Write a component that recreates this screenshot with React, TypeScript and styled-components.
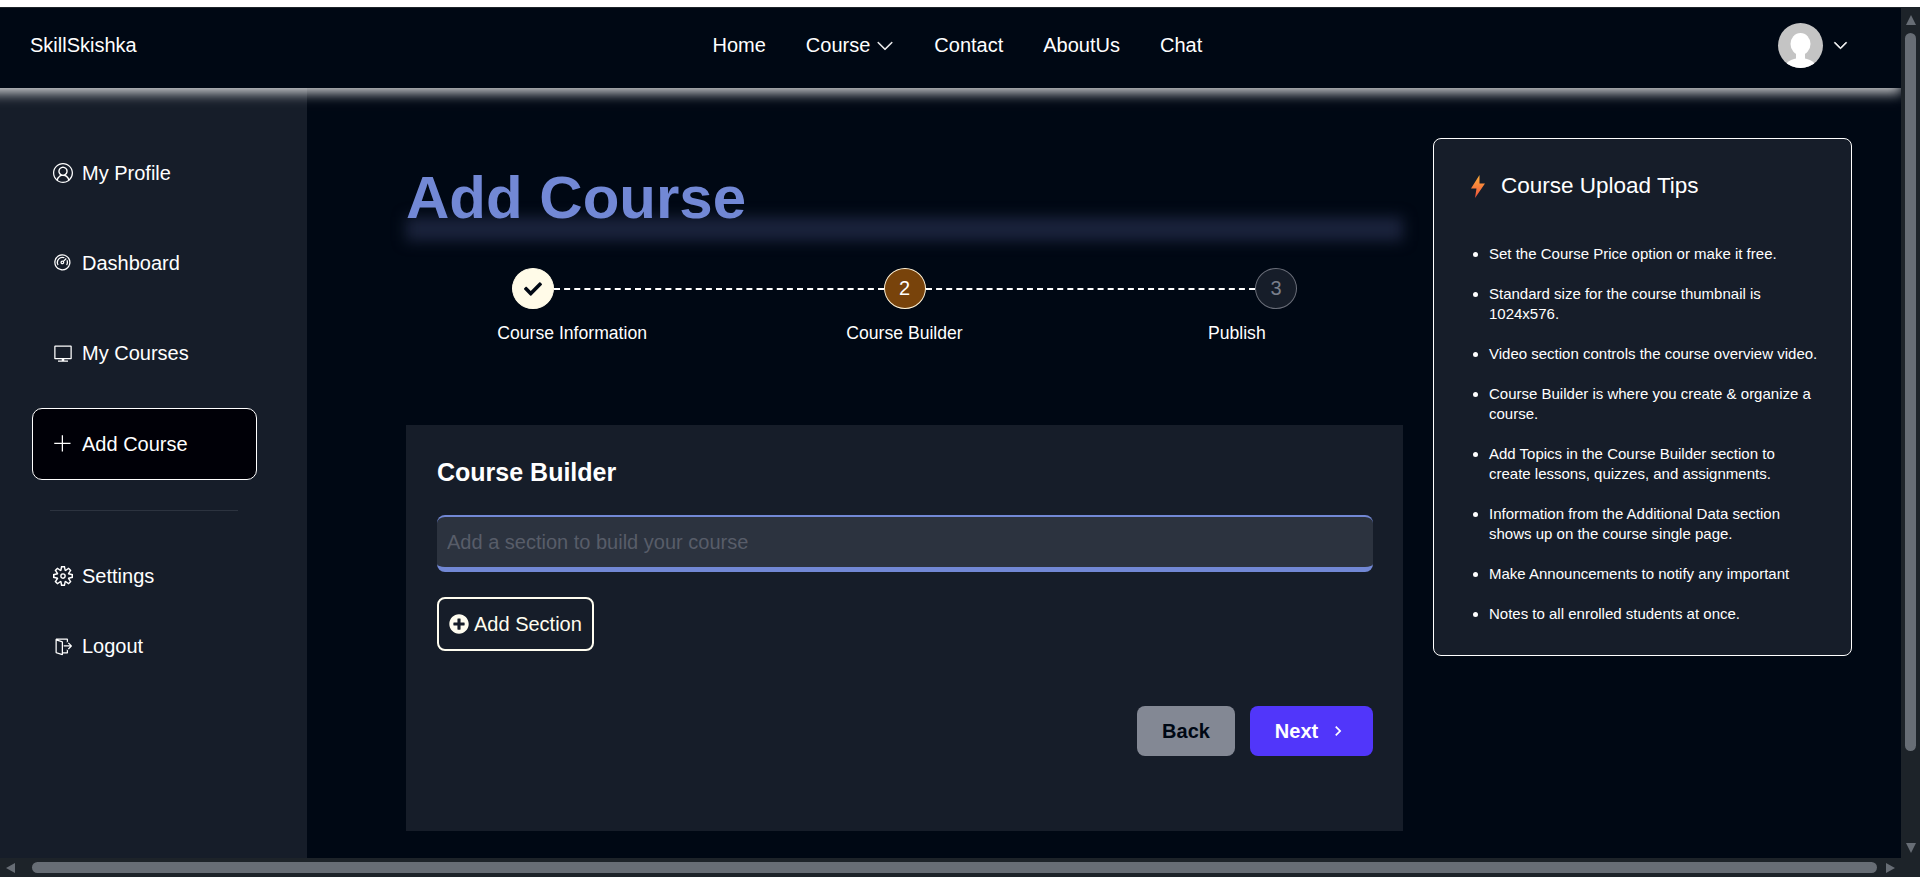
import { createGlobalStyle, styled } from "styled-components";
import { BsChevronDown } from "react-icons/bs";
import { FaCheck, FaPlusCircle } from "react-icons/fa";
import { MdNavigateNext } from "react-icons/md";
import {
  VscAccount,
  VscAdd,
  VscDashboard,
  VscSettingsGear,
  VscSignOut,
  VscVm,
} from "react-icons/vsc";

const GlobalStyle = createGlobalStyle`
  * { box-sizing: border-box; }
  html, body { margin: 0; height: 100%; overflow: hidden; background: #fff; }
  body { font-family: "Liberation Sans", Arial, sans-serif; color: #fff; }
  ul, h1, h2, h3, p { margin: 0; padding: 0; }
`;

const links = ["Home", "Course", "Contact", "AboutUs", "Chat"];

const topItems = [
  { label: "My Profile", icon: <VscAccount /> },
  { label: "Dashboard", icon: <VscDashboard /> },
  { label: "My Courses", icon: <VscVm /> },
  { label: "Add Course", icon: <VscAdd />, active: true },
];

const bottomItems = [
  { label: "Settings", icon: <VscSettingsGear /> },
  { label: "Logout", icon: <VscSignOut /> },
];

const tips = [
  "Set the Course Price option or make it free.",
  "Standard size for the course thumbnail is 1024x576.",
  "Video section controls the course overview video.",
  "Course Builder is where you create & organize a course.",
  "Add Topics in the Course Builder section to create lessons, quizzes, and assignments.",
  "Information from the Additional Data section shows up on the course single page.",
  "Make Announcements to notify any important",
  "Notes to all enrolled students at once.",
];

function App() {
  return (
    <>
      <GlobalStyle />
      <Window>
        <Viewport>
          <Page>
            <Navbar>
              <Logo>SkillSkishka</Logo>
              <NavLinks>
                {links.map((link) => (
                  <NavLink key={link}>
                    {link}
                    {link === "Course" && (
                      <BsChevronDown size={18} stroke="currentColor" strokeWidth={0.4} />
                    )}
                  </NavLink>
                ))}
              </NavLinks>
              <Profile>
                <Avatar>
                  <svg width="45" height="45" viewBox="0 0 45 45">
                    <ellipse cx="22.5" cy="21" rx="10" ry="11" fill="#fff" />
                    <rect x="18" y="28" width="9" height="10" fill="#fff" />
                    <ellipse cx="22.5" cy="47" rx="17" ry="12" fill="#fff" />
                  </svg>
                </Avatar>
                <BsChevronDown size={15} stroke="currentColor" strokeWidth={0.8} />
              </Profile>
            </Navbar>
            <Body>
              <Sidebar>
                <SideGroup>
                  {topItems.map((item) => (
                    <SideItem key={item.label} $tall $active={item.active}>
                      {item.icon}
                      {item.label}
                    </SideItem>
                  ))}
                </SideGroup>
                <SideDivider />
                <BottomGroup>
                  {bottomItems.map((item) => (
                    <SideItem key={item.label}>
                      {item.icon}
                      {item.label}
                    </SideItem>
                  ))}
                </BottomGroup>
              </Sidebar>
              <Main>
                <Column>
                  <Title>Add Course</Title>
                  <StepRow>
                    <StepCircle $state="done">
                      <FaCheck size={18} />
                    </StepCircle>
                    <Dashes />
                    <StepCircle $state="current">2</StepCircle>
                    <Dashes />
                    <StepCircle $state="todo">3</StepCircle>
                  </StepRow>
                  <StepLabels>
                    <span>Course Information</span>
                    <span>Course Builder</span>
                    <span>Publish</span>
                  </StepLabels>
                  <BuilderCard>
                    <BuilderTitle>Course Builder</BuilderTitle>
                    <SectionInput placeholder="Add a section to build your course" />
                    <AddSection>
                      <FaPlusCircle size={20} />
                      Add Section
                    </AddSection>
                    <Actions>
                      <BackButton>Back</BackButton>
                      <NextButton>
                        Next
                        <MdNavigateNext size={20} />
                      </NextButton>
                    </Actions>
                  </BuilderCard>
                </Column>
                <TipsCard>
                  <TipsTitle>
                    <svg width="14" height="23" viewBox="0 0 14 23">
                      <defs>
                        <linearGradient id="bolt" x1="0" y1="0" x2="0" y2="1">
                          <stop offset="0" stopColor="#ffb03a" />
                          <stop offset="1" stopColor="#f0503c" />
                        </linearGradient>
                      </defs>
                      <path d="M8.5 0 L0 13.5 H5.5 L4 23 L14 8.5 H8.5 Z" fill="url(#bolt)" />
                    </svg>
                    Course Upload Tips
                  </TipsTitle>
                  <TipsList>
                    {tips.map((tip) => (
                      <li key={tip}>{tip}</li>
                    ))}
                  </TipsList>
                </TipsCard>
              </Main>
            </Body>
          </Page>
          <VerticalBar>
            <ArrowUp />
            <VerticalThumb />
            <ArrowDown />
          </VerticalBar>
        </Viewport>
        <HorizontalBar>
          <ArrowLeft />
          <HorizontalThumb />
          <ArrowRight />
        </HorizontalBar>
      </Window>
    </>
  );
}

export default App;

const Window = styled.div`
  height: 100vh;
  padding-top: 8px;
  display: flex;
  flex-direction: column;
  background: #fff;
  overflow: hidden;
`;

const Viewport = styled.div`
  flex: 1;
  min-height: 0;
  display: flex;
  border-top: 1px solid #1d2329;
  margin-top: -1px;
`;

const Page = styled.div`
  flex: 1;
  min-width: 0;
  display: flex;
  flex-direction: column;
  background: #000814;
  overflow: hidden;
`;

const Navbar = styled.header`
  position: relative;
  z-index: 2;
  flex: 0 0 80px;
  margin-left: -24px;
  padding: 0 53px 0 54px;
  display: flex;
  align-items: center;
  justify-content: space-between;
  background: #000814;
  box-shadow: 0 5px 12px rgba(255, 255, 255, 0.8);
`;

const Logo = styled.div`
  font-size: 20px;
  padding-bottom: 5px;
`;

const NavLinks = styled.nav`
  display: flex;
  gap: 40px;
  padding-bottom: 5px;
`;

const NavLink = styled.div`
  display: flex;
  align-items: center;
  gap: 6px;
  font-size: 20px;
`;

const Profile = styled.div`
  display: flex;
  align-items: center;
  gap: 10px;
  padding-bottom: 6px;
`;

const Avatar = styled.div`
  width: 45px;
  height: 45px;
  border-radius: 50%;
  background: #c4c4c4;
  overflow: hidden;
  svg {
    display: block;
  }
`;

const Body = styled.div`
  flex: 1;
  min-height: 0;
  display: flex;
`;

const Sidebar = styled.aside`
  flex: 0 0 307px;
  padding: 50px 50px 0 32px;
  background: #161d29;
`;

const SideGroup = styled.div`
  display: flex;
  flex-direction: column;
  gap: 18px;
  width: 225px;
`;

const BottomGroup = styled(SideGroup)`
  margin-top: 40px;
`;

const SideItem = styled.div<{ $active?: boolean; $tall?: boolean }>`
  height: ${(p) => (p.$tall ? "72px" : "52px")};
  display: flex;
  align-items: center;
  gap: 9px;
  padding: 0 0 ${(p) => (p.$active ? "0" : "2px")} 20px;
  font-size: 20px;
  border: 1px solid ${(p) => (p.$active ? "#fff" : "transparent")};
  border-radius: 10px;
  background: ${(p) => (p.$active ? "#000007" : "transparent")};
  svg {
    font-size: 20px;
    flex: none;
  }
`;

const SideDivider = styled.div`
  width: 188px;
  height: 1px;
  margin: 30px 0 0 18px;
  background: #2c333f;
`;

const Main = styled.main`
  flex: 1;
  min-width: 0;
  padding: 50px 49px 0 99px;
  display: flex;
  gap: 30px;
  align-items: flex-start;
`;

const Column = styled.div`
  flex: 0 0 997px;
`;

const Title = styled.h1`
  position: relative;
  isolation: isolate;
  height: 49px;
  margin-top: 30px;
  font-size: 60px;
  line-height: 60px;
  font-weight: 700;
  color: #7288d5;
  &::after {
    content: "";
    position: absolute;
    z-index: -1;
    left: 0;
    right: 0;
    top: 49px;
    height: 24px;
    background: #1a233c;
    filter: blur(7px);
  }
`;

const StepRow = styled.div`
  margin: 51px 0 0 106px;
  width: 785px;
  display: flex;
  align-items: center;
`;

const Dashes = styled.div`
  flex: 1;
  border-top: 2px dashed #fff;
`;

const stepColors = {
  done: "background: #fffbe8; color: #000814; border-color: #fffbe8;",
  current: "background: #78430b; color: #fff; border-color: #fff2d6;",
  todo: "background: #161d29; color: #7a7f8b; border-color: #6a6e79;",
};

const StepCircle = styled.div<{ $state: keyof typeof stepColors }>`
  width: 42px;
  height: 41px;
  flex: none;
  border: 1px solid;
  border-radius: 50%;
  display: flex;
  align-items: center;
  justify-content: center;
  font-size: 20px;
  ${(p) => stepColors[p.$state]}
`;

const StepLabels = styled.div`
  margin-top: 13px;
  display: grid;
  grid-template-columns: repeat(3, 1fr);
  text-align: center;
  font-size: 17.6px;
  line-height: 22px;
`;

const BuilderCard = styled.section`
  height: 406px;
  margin-top: 81px;
  padding: 32px 30px 0 31px;
  background: #161d29;
`;

const BuilderTitle = styled.h2`
  font-size: 25px;
  line-height: 30px;
  font-weight: 700;
`;

const SectionInput = styled.input`
  display: block;
  width: 100%;
  height: 57px;
  margin-top: 28px;
  padding: 0 10px;
  border: 0;
  border-top: 2px solid #7288d5;
  border-bottom: 5px solid #7288d5;
  border-radius: 8px;
  background: #2c333f;
  color: #fff;
  font: 20px "Liberation Sans", Arial, sans-serif;
  &::placeholder {
    color: #585d69;
    opacity: 1;
  }
`;

const AddSection = styled.button`
  height: 54px;
  margin-top: 25px;
  padding: 0 10px;
  display: flex;
  align-items: center;
  gap: 5px;
  border: 2px solid #fffdf0;
  border-radius: 8px;
  background: transparent;
  color: #fffdf0;
  font: 20px "Liberation Sans", Arial, sans-serif;
`;

const Actions = styled.div`
  margin-top: 55px;
  display: flex;
  justify-content: flex-end;
  gap: 15px;
`;

const BackButton = styled.button`
  width: 98px;
  height: 50px;
  border: 0;
  border-radius: 8px;
  background: #838894;
  color: #000814;
  font: 700 20px "Liberation Sans", Arial, sans-serif;
`;

const NextButton = styled.button`
  width: 123px;
  height: 50px;
  display: flex;
  align-items: center;
  justify-content: center;
  gap: 10px;
  border: 0;
  border-radius: 8px;
  background: #5136fa;
  color: #fff;
  font: 700 20px "Liberation Sans", Arial, sans-serif;
`;

const TipsCard = styled.aside`
  flex: 0 0 419px;
  height: 518px;
  padding: 35px 32px 0 37px;
  border: 1px solid #fff;
  border-radius: 8px;
  background: #161d29;
`;

const TipsTitle = styled.h3`
  display: flex;
  align-items: center;
  gap: 16px;
  font-size: 22.5px;
  line-height: 24px;
  font-weight: 400;
`;

const TipsList = styled.ul`
  margin-top: 46px;
  padding-left: 18px;
  display: flex;
  flex-direction: column;
  gap: 20px;
  font-size: 15px;
  line-height: 20px;
`;

const VerticalBar = styled.div`
  flex: 0 0 19px;
  padding: 7px 4px 5px;
  display: flex;
  flex-direction: column;
  align-items: center;
  background: #1d2329;
`;

const VerticalThumb = styled.div`
  flex: none;
  width: 11px;
  height: 718px;
  margin: 8px 0 auto;
  border-radius: 6px;
  background: #676d75;
`;

const HorizontalBar = styled.div`
  flex: 0 0 19px;
  padding: 4px 6px;
  display: flex;
  align-items: center;
  background: #1d2329;
`;

const HorizontalThumb = styled.div`
  height: 11px;
  width: 1845px;
  margin: 0 9px 0 17px;
  border-radius: 6px;
  background: #676d75;
`;

const ArrowUp = styled.div`
  flex: none;
  width: 0;
  height: 0;
  border: 5.5px solid transparent;
  border-top: 0;
  border-bottom: 10px solid #676d75;
`;

const ArrowDown = styled.div`
  flex: none;
  width: 0;
  height: 0;
  border: 5.5px solid transparent;
  border-bottom: 0;
  border-top: 10px solid #676d75;
`;

const ArrowLeft = styled.div`
  flex: none;
  width: 0;
  height: 0;
  border: 5.5px solid transparent;
  border-left: 0;
  border-right: 9px solid #676d75;
`;

const ArrowRight = styled.div`
  flex: none;
  width: 0;
  height: 0;
  border: 5.5px solid transparent;
  border-right: 0;
  border-left: 9px solid #676d75;
`;
